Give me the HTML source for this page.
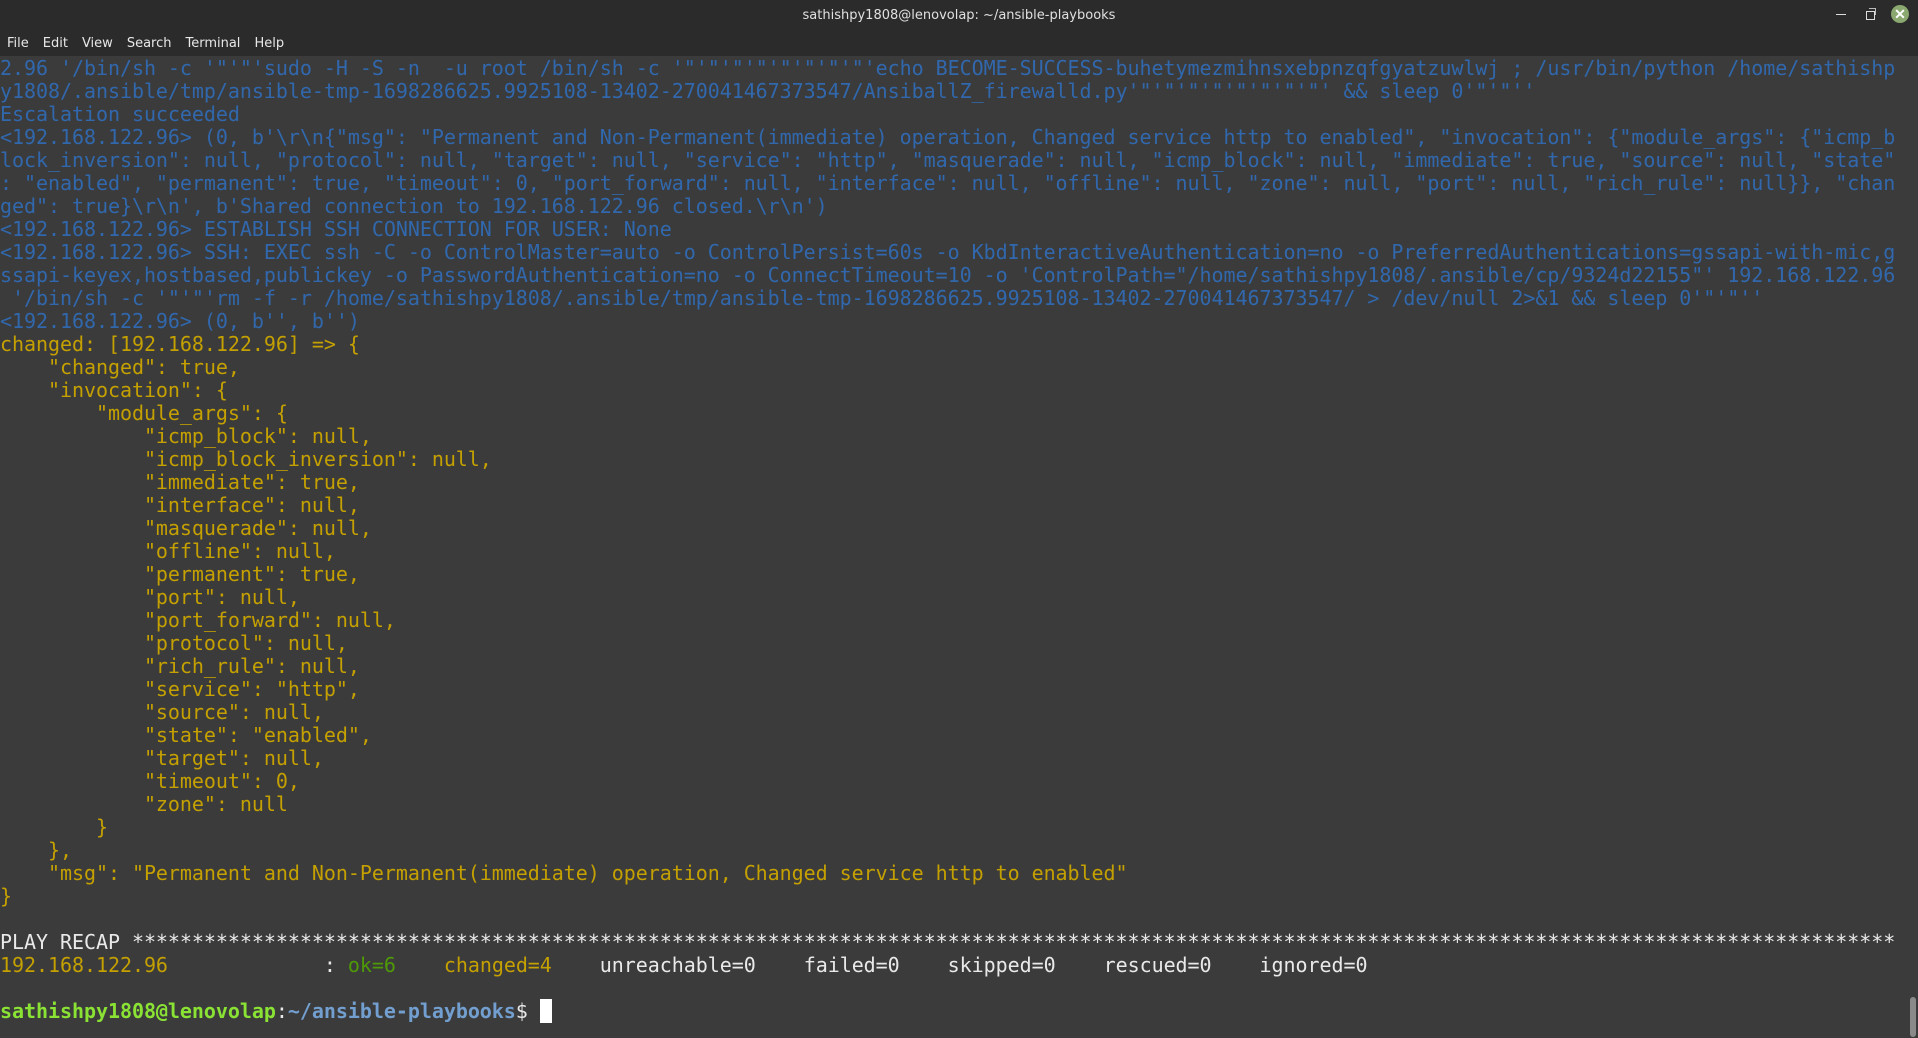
<!DOCTYPE html>
<html><head><meta charset="utf-8"><style>
html,body{margin:0;padding:0;}
body{width:1918px;height:1038px;background:#3b3b3b;overflow:hidden;position:relative;font-family:"DejaVu Sans Mono","Liberation Mono",monospace;}
#tb{position:absolute;left:0;top:0;width:1918px;height:56px;background:#2b2b2b;}
#title{position:absolute;top:8px;left:0;width:1918px;text-align:center;color:#e0e0e0;font:13px "DejaVu Sans","Liberation Sans",sans-serif;}
#menu{position:absolute;top:36px;left:7px;color:#e8e8e8;font:13px "DejaVu Sans","Liberation Sans",sans-serif;}
#menu span{margin-right:14px;}
#term{position:absolute;left:0;top:57px;font-size:20px;line-height:23px;white-space:pre;letter-spacing:-0.046px;}
.b{color:#3168ad}.y{color:#c4a000}.w{color:#e9e9e9}.g{color:#4e9a06}.pg{color:#8ae234;font-weight:bold}.pb{color:#729fcf;font-weight:bold}
</style></head><body>
<div id="tb">
<div id="title">sathishpy1808@lenovolap: ~/ansible-playbooks</div>
<div id="menu"><span>File</span><span>Edit</span><span>View</span><span>Search</span><span>Terminal</span><span>Help</span></div>
<div style="position:absolute;left:1836px;top:14px;width:10px;height:1px;background:#ddd"></div>
<div style="position:absolute;left:1866px;top:11px;width:7px;height:7px;border:1px solid #ddd"></div>
<div style="position:absolute;left:1869px;top:8px;width:6px;height:6px;border-top:1px solid #bbb;border-right:1px solid #bbb"></div>
<div style="position:absolute;left:1891px;top:5px;width:18px;height:18px;border-radius:50%;background:#8aa86f;color:#fff;font:bold 14px sans-serif;text-align:center;line-height:18px">✕</div>
</div>
<div id="term"><span class="b">2.96 '/bin/sh -c '"'"'sudo -H -S -n  -u root /bin/sh -c '"'"'"'"'"'"'"'"'echo BECOME-SUCCESS-buhetymezmihnsxebpnzqfgyatzuwlwj ; /usr/bin/python /home/sathishp
y1808/.ansible/tmp/ansible-tmp-1698286625.9925108-13402-270041467373547/AnsiballZ_firewalld.py'"'"'"'"'"'"'"'"' &amp;&amp; sleep 0'"'"''
Escalation succeeded
&lt;192.168.122.96&gt; (0, b'\r\n{"msg": "Permanent and Non-Permanent(immediate) operation, Changed service http to enabled", "invocation": {"module_args": {"icmp_b
lock_inversion": null, "protocol": null, "target": null, "service": "http", "masquerade": null, "icmp_block": null, "immediate": true, "source": null, "state"
: "enabled", "permanent": true, "timeout": 0, "port_forward": null, "interface": null, "offline": null, "zone": null, "port": null, "rich_rule": null}}, "chan
ged": true}\r\n', b'Shared connection to 192.168.122.96 closed.\r\n')
&lt;192.168.122.96&gt; ESTABLISH SSH CONNECTION FOR USER: None
&lt;192.168.122.96&gt; SSH: EXEC ssh -C -o ControlMaster=auto -o ControlPersist=60s -o KbdInteractiveAuthentication=no -o PreferredAuthentications=gssapi-with-mic,g
ssapi-keyex,hostbased,publickey -o PasswordAuthentication=no -o ConnectTimeout=10 -o 'ControlPath="/home/sathishpy1808/.ansible/cp/9324d22155"' 192.168.122.96
 '/bin/sh -c '"'"'rm -f -r /home/sathishpy1808/.ansible/tmp/ansible-tmp-1698286625.9925108-13402-270041467373547/ &gt; /dev/null 2&gt;&amp;1 &amp;&amp; sleep 0'"'"''
&lt;192.168.122.96&gt; (0, b'', b'')</span>
<span class="y">changed: [192.168.122.96] =&gt; {
    "changed": true,
    "invocation": {
        "module_args": {
            "icmp_block": null,
            "icmp_block_inversion": null,
            "immediate": true,
            "interface": null,
            "masquerade": null,
            "offline": null,
            "permanent": true,
            "port": null,
            "port_forward": null,
            "protocol": null,
            "rich_rule": null,
            "service": "http",
            "source": null,
            "state": "enabled",
            "target": null,
            "timeout": 0,
            "zone": null
        }
    },
    "msg": "Permanent and Non-Permanent(immediate) operation, Changed service http to enabled"
}</span>

<span class="w">PLAY RECAP ***************************************************************************************************************************************************</span>
<span class="y">192.168.122.96</span><span class="w">             : </span><span class="g">ok=6   </span> <span class="y">changed=4   </span> <span class="w">unreachable=0    failed=0    skipped=0    rescued=0    ignored=0   </span>

<span class="pg">sathishpy1808@lenovolap</span><span class="w">:</span><span class="pb">~/ansible-playbooks</span><span class="w">$ </span><span style="background:#fff"> </span></div>
<div style="position:absolute;left:1910px;top:997px;width:6px;height:40px;border-radius:3px;background:#8a8a8a"></div>
</body></html>
